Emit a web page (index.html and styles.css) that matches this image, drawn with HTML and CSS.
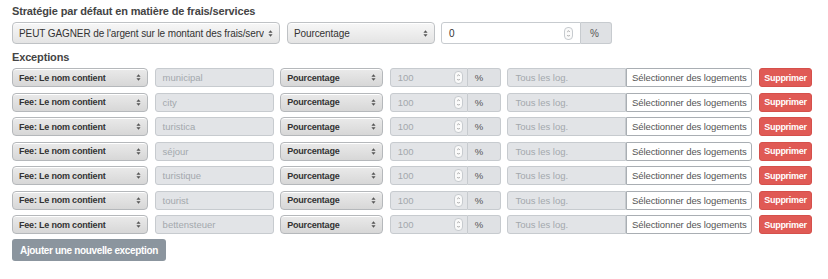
FILE: index.html
```html
<!DOCTYPE html>
<html lang="fr">
<head>
    <meta charset="UTF-8">
    <meta name="viewport" content="width=device-width, initial-scale=1.0">
    <title>Stratégie frais/services</title>
    <link rel="stylesheet" href="styles.css">
</head>
<body>
    <div class="panel">
        <div class="label">Stratégie par défaut en matière de frais/services</div>
        <div class="default-row">
            <div class="select big w-strategy"><span class="sel-text">PEUT GAGNER de l'argent sur le montant des frais/serv</span><svg class="arrows" viewBox="0 0 6 10"><path d="M3 1 L5.5 4 H0.5 Z M3 9 L5.5 6 H0.5 Z"/></svg></div>
            <div class="select big w-type"><span class="sel-text">Pourcentage</span><svg class="arrows" viewBox="0 0 6 10"><path d="M3 1 L5.5 4 H0.5 Z M3 9 L5.5 6 H0.5 Z"/></svg></div>
            <div class="group">
                <div class="input big w-amount"><span>0</span><span class="spin"><svg viewBox="0 0 8 14"><path d="M2.5 5 L4 3.5 L5.5 5 M2.5 9 L4 10.5 L5.5 9"/></svg></span></div>
                <div class="addon big">%</div>
            </div>
        </div>

        <div class="label exceptions-label">Exceptions</div>
        <div class="exceptions" id="exceptions"></div>

        <button class="add-btn">Ajouter une nouvelle exception</button>
    </div>

    <script>
        // keywords for the fee name filter
        var names = ["municipal", "city", "turistica", "séjour", "turistique", "tourist", "bettensteuer"];
        var arrows = '<svg class="arrows" viewBox="0 0 6 10"><path d="M3 1 L5.5 4 H0.5 Z M3 9 L5.5 6 H0.5 Z"/></svg>';
        var spin = '<span class="spin"><svg viewBox="0 0 8 14"><path d="M2.5 5 L4 3.5 L5.5 5 M2.5 9 L4 10.5 L5.5 9"/></svg></span>';

        var html = "";
        names.forEach(function (name) {
            html += '<div class="ex-row">' +
                '<div class="select small"><span class="sel-text">Fee: Le nom contient</span>' + arrows + '</div>' +
                '<div class="input small disabled"><span class="ph">' + name + '</span></div>' +
                '<div class="select small"><span class="sel-text">Pourcentage</span>' + arrows + '</div>' +
                '<div class="group"><div class="input small disabled w-num"><span class="ph">100</span>' + spin + '</div><div class="addon small">%</div></div>' +
                '<div class="group"><div class="input small disabled w-logs"><span class="ph">Tous les log.</span></div><div class="pick-btn">Sélectionner des logements</div></div>' +
                '<button class="del-btn">Supprimer</button>' +
                '</div>';
        });
        document.getElementById("exceptions").innerHTML = html;
    </script>
</body>
</html>
```

FILE: styles.css
```css
body { margin: 0; background: #fff; font-family: "Liberation Sans", Arial, sans-serif; color: #333; }
.panel { padding: 4px 12px; }
.label { font-size: 11px; line-height: 14px; font-weight: bold; color: #444; margin-bottom: 4px; letter-spacing: -0.15px; }
.exceptions-label { margin-top: 6px; }

.default-row { display: flex; align-items: center; height: 22px; }
.w-strategy { width: 268px; margin-right: 7px; }
.w-type { width: 148px; margin-right: 6px; }
.w-amount { width: 140px; }

.select { box-sizing: border-box; display: flex; align-items: center; justify-content: space-between; border: 1px solid #bfc2c5; border-radius: 4px; background: linear-gradient(#f7f7f7, #e4e4e4); box-shadow: inset 0 1px 0 #fff; padding: 0 6px; overflow: hidden; white-space: nowrap; }
.select.big { height: 22px; font-size: 10px; letter-spacing: -0.1px; color: #333; }
.select.small { height: 19px; font-size: 9px; font-weight: bold; letter-spacing: -0.2px; color: #333; background: linear-gradient(#eaeaea, #d7d7d7); border-color: #b5b8bb; }
.sel-text { overflow: hidden; }
.arrows { width: 5px; height: 9px; flex: none; fill: #555; margin-left: 4px; }

.group { display: flex; }
.input { box-sizing: border-box; display: flex; align-items: center; justify-content: space-between; border: 1px solid #c7cbcf; background: #fff; border-radius: 3px; padding: 0 7px; white-space: nowrap; }
.input.big { height: 22px; font-size: 10px; }
.input.small { height: 19px; font-size: 9.5px; }
.input.disabled { background: #e2e4e7; }
.group .input { border-top-right-radius: 0; border-bottom-right-radius: 0; }
.ph { color: #a3a8ad; }
.spin { display: flex; width: 7px; height: 11px; border: 1px solid #c7cbcf; border-radius: 4px; background: #fafafa; }
.spin svg { width: 7px; height: 11px; fill: none; stroke: #777; stroke-width: 0.9; }

.addon { box-sizing: border-box; display: flex; align-items: center; border: 1px solid #c7cbcf; border-left: none; background: #dfe1e4; color: #555; border-radius: 0 3px 3px 0; }
.addon.big { height: 22px; width: 31px; font-size: 10px; padding-left: 9px; }
.addon.small { height: 19px; width: 33px; font-size: 9.5px; padding-left: 7px; }

.exceptions { display: flex; flex-direction: column; gap: 5.5px; }
.ex-row { display: grid; grid-template-columns: 136px 119px 103px 111px 245px 53px; column-gap: 6.6px; align-items: center; height: 19px; }
.w-num { width: 78px; padding-right: 4px; }
.w-logs { width: 119px; }
.pick-btn { box-sizing: border-box; width: 126px; height: 19px; display: flex; align-items: center; justify-content: center; border: 1px solid #a9aeb3; border-radius: 0 3px 3px 0; background: #fff; color: #555; font-size: 9.5px; letter-spacing: -0.1px; white-space: nowrap; }
.del-btn { box-sizing: border-box; height: 19px; width: 53px; padding: 0; border: 1px solid #d5504b; border-radius: 3px; background: #e05a55; color: #fff; font-family: inherit; font-size: 9px; font-weight: bold; letter-spacing: -0.3px; }

.add-btn { margin-top: 5px; height: 22px; width: 154px; padding: 0; border: none; border-radius: 3px; background: #8b959e; color: #fff; font-family: inherit; font-size: 10px; font-weight: bold; letter-spacing: -0.35px; white-space: nowrap; }
```
